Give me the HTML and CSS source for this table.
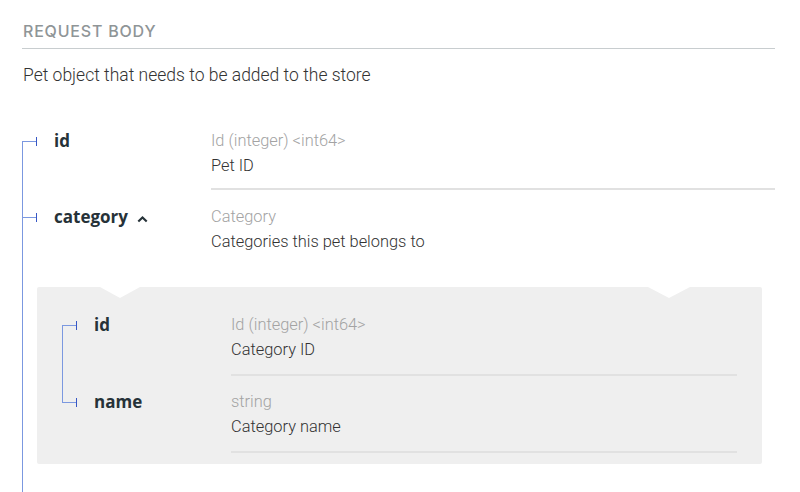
FILE: index.html
```html
<!DOCTYPE html>
<html>
<head>
<meta charset="utf-8">
<link rel="stylesheet" href="styles.css">
</head>
<body>
<div class="page">
  <h5 class="section-title">Request Body</h5>
  <p class="body-desc">Pet object that needs to be added to the store</p>
  <div class="props">
    <div class="row">
      <div class="name name-a"><span class="branch"></span><span class="pname">id</span></div>
      <div class="detail bordered">
        <div class="type">Id (integer) &lt;int64&gt;</div>
        <div class="desc">Pet ID</div>
      </div>
    </div>
    <div class="row">
      <div class="name name-a"><span class="branch"></span><span class="pname">category</span><svg class="chevron" width="11" height="8" viewBox="0 0 11 8"><polyline points="1.3,6.6 5.5,2.4 9.7,6.6" fill="none" stroke="#263238" stroke-width="2.1"/></svg></div>
      <div class="detail">
        <div class="type">Category</div>
        <div class="desc">Categories this pet belongs to</div>
      </div>
    </div>
    <div class="nested-wrap">
      <div class="nested">
        <div class="row first">
          <div class="name name-c"><span class="branch"></span><span class="pname">id</span></div>
          <div class="detail bordered">
            <div class="type">Id (integer) &lt;int64&gt;</div>
            <div class="desc">Category ID</div>
          </div>
        </div>
        <div class="row last">
          <div class="name name-c"><span class="branch"></span><span class="pname">name</span></div>
          <div class="detail bordered">
            <div class="type">string</div>
            <div class="desc">Category name</div>
          </div>
        </div>
      </div>
    </div>
  </div>
</div>
</body>
</html>
```
FILE: styles.css
```css
html, body {
  margin: 0;
  padding: 0;
  background: #ffffff;
}

.page {
  padding: 21px 25px 0 22px;
  font-family: Roboto, "Liberation Sans", sans-serif;
  color: #333333;
}

.section-title {
  margin: 0;
  padding: 0 0 7px 1px;
  font-family: Inter, "Open Sans", sans-serif;
  font-weight: 500;
  font-size: 16px;
  letter-spacing: 0.8px;
  line-height: 20px;
  text-transform: uppercase;
  color: #8f9597;
  border-bottom: 1px solid #c8cdcf;
}

.body-desc {
  margin: 16px 0 0 1px;
  font-size: 17.5px;
  font-weight: 300;
  line-height: 20px;
  color: #333333;
}

.props {
  margin-top: 29px;
  padding-bottom: 40px;
  background: linear-gradient(#7b98e0, #7b98e0) 0 27px / 1px 100% no-repeat;
}

.row {
  display: flex;
}

.name {
  flex: none;
  padding-top: 17px;
  line-height: 20px;
  display: flex;
  align-items: center;
  align-self: flex-start;
}

.name-a { width: 189px; }
.name-c { width: 169px; }

.branch {
  flex: none;
  width: 15px;
  height: 9px;
  margin-right: 17px;
  background:
    linear-gradient(#3757c5, #3757c5) 100% 0 / 1px 100% no-repeat,
    linear-gradient(#7b98e0, #7b98e0) 0 50% / 100% 1px no-repeat;
}

.pname {
  font-family: "Open Sans", Inter, sans-serif;
  font-weight: 700;
  font-size: 17px;
  color: #263238;
}

.chevron {
  margin-left: 9px;
  margin-top: 3px;
}

.detail {
  flex: 1;
  padding-top: 17px;
  font-size: 16.4px;
  font-weight: 300;
  line-height: 20px;
}

.detail.bordered {
  padding-bottom: 12px;
  border-bottom: 2px solid #e1e1e1;
}

.type {
  color: #a3a3a3;
}

.desc {
  margin-top: 5px;
  color: #333333;
}

.nested-wrap {
  padding: 35px 13px 0 15px;
}

.nested {
  position: relative;
  background: #efefef;
  border-radius: 2px;
  padding: 11px 25px 11px 25px;
}

.nested::before,
.nested::after {
  content: "";
  position: absolute;
  top: 0;
  border-top: 11px solid #ffffff;
}

.nested::before {
  left: 63px;
  border-left: 20px solid transparent;
  border-right: 20px solid transparent;
}

.nested::after {
  right: 72px;
  border-left: 21px solid transparent;
  border-right: 21px solid transparent;
}

.nested .detail.bordered {
  padding-bottom: 14px;
}

.nested .row.last .name,
.nested .row.last .detail {
  padding-top: 16px;
}

.nested .row.first {
  background: linear-gradient(#7b98e0, #7b98e0) 0 27px / 1px 100% no-repeat;
}

.nested .row.last {
  background: linear-gradient(#7b98e0, #7b98e0) 0 0 / 1px 26px no-repeat;
}
```
